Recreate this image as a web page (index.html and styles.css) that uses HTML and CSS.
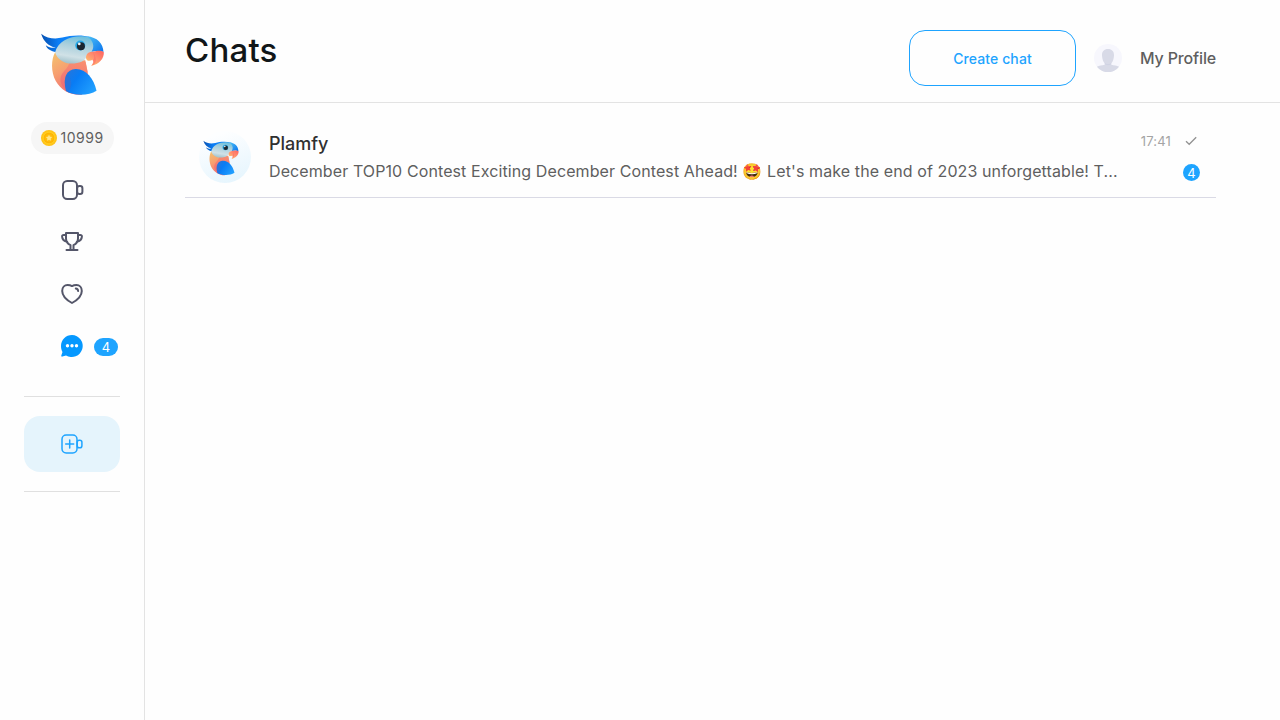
FILE: index.html
```html
<!DOCTYPE html>
<html lang="en">
<head>
<meta charset="utf-8">
<title>Chats</title>
<link rel="stylesheet" href="styles.css">
</head>
<body>
<svg class="defs" width="0" height="0" aria-hidden="true">
  <defs>
    <linearGradient id="crest" x1="0" y1="0" x2="1" y2="0"><stop offset="0" stop-color="#064fb0"/><stop offset=".35" stop-color="#0a7df5"/><stop offset="1" stop-color="#1d8fff"/></linearGradient>
    <linearGradient id="head" x1=".65" y1="0" x2=".4" y2="1"><stop offset="0" stop-color="#69bfde"/><stop offset=".35" stop-color="#a9cfdc"/><stop offset=".75" stop-color="#d0e1e6"/><stop offset="1" stop-color="#a3c3cc"/></linearGradient>
    <linearGradient id="body" x1="0" y1="0" x2=".5" y2="1"><stop offset="0" stop-color="#f3c46d"/><stop offset=".45" stop-color="#f7a070"/><stop offset="1" stop-color="#f06874"/></linearGradient>
    <linearGradient id="beak" x1=".8" y1="0" x2=".1" y2=".8"><stop offset="0" stop-color="#ff6a63"/><stop offset=".55" stop-color="#ff9270"/><stop offset="1" stop-color="#ffc36b"/></linearGradient>
    <linearGradient id="wing" x1="0" y1=".2" x2="1" y2=".8"><stop offset="0" stop-color="#2576dc"/><stop offset=".35" stop-color="#087cf5"/><stop offset="1" stop-color="#23a2ff"/></linearGradient>
    <linearGradient id="neck" x1=".8" y1="0" x2=".2" y2="1"><stop offset="0" stop-color="#f98a70"/><stop offset="1" stop-color="#ee6674"/></linearGradient>
    <linearGradient id="brow" x1="0" y1="0" x2="1" y2="1"><stop offset="0" stop-color="#4cc0f5"/><stop offset="1" stop-color="#0873ee"/></linearGradient>
    <symbol id="parrot" viewBox="31 25 193 191">
      <path fill="url(#crest)" d="M33 28C51 43 75 45 97 40C120 34 154 30 182 39L100 58L78 84C63 81 51 75 47 63C58 71 68 72 77 70C54 65 39 49 33 28Z"/>
      <path fill="url(#body)" d="M75 84C63 106 62 142 77 171C93 200 125 216 156 212L174 150L166 108L118 108Z"/>
      <path fill="url(#neck)" opacity=".75" d="M119 113H167L174 146C145 129 121 138 113 153C107 165 106 184 111 200C90 185 83 161 103 140C111 132 117 124 119 113Z"/>
      <path fill="url(#head)" d="M75 84C84 52 118 35 157 36C181 37 196 46 197 66C195 87 180 79 170 94C168 113 140 120 118 118C101 116 81 106 75 84Z"/>
      <path fill="url(#brow)" d="M171 36C202 39 220 57 221 84C208 78 197 81 185 83C195 67 191 49 171 36Z"/>
      <path fill="url(#beak)" d="M168 100C169 84 182 82 197 81C208 79 215 80 222 84C223 103 208 120 184 125C191 118 193 111 188 107C181 111 169 113 168 100Z"/>
      <path fill="#ff6969" opacity=".6" d="M188 82C196 96 194 105 188 108C192 112 190 119 184 125C205 121 199 96 188 82Z"/>
      <path fill="url(#wing)" d="M108 201C97 161 110 136 137 135C168 134 191 163 200 200C178 215 132 217 108 201Z"/>
      <path fill="#4c68bd" opacity=".35" d="M108 153C131 165 125 194 114 204L108 201C103 182 103 164 108 153Z"/>
      <circle cx="151" cy="64" r="15" fill="#26a7e7"/>
      <circle cx="153" cy="66" r="12" fill="#1b2630"/>
      <circle cx="148" cy="59" r="4" fill="#eefaff"/>
    </symbol>
    <radialGradient id="coin"><stop offset="0" stop-color="#ffcf2b"/><stop offset=".62" stop-color="#ffb300"/><stop offset=".7" stop-color="#ffcc20"/><stop offset="1" stop-color="#ffbf13"/></radialGradient>
  </defs>
</svg>
<div class="app">
  <aside class="sidebar">
    <svg class="logo"><use href="#parrot"/></svg>
    <div class="balance">
      <svg width="16" height="16" viewBox="0 0 16 16"><circle cx="8" cy="8" r="8" fill="url(#coin)"/><path fill="#ffe58a" d="M8 4.800l1 2 2.200.3-1.600 1.500.4 2.200-2-1-2 1 .4-2.200-1.600-1.500L7 6.800z"/></svg>
      <span>10999</span>
    </div>
    <nav class="nav">
      <a class="nav-item"><svg class="icon" viewBox="0 0 24 24"><rect x="3" y="3" width="14" height="18" rx="4.200"/><rect x="17.200" y="8" width="5.200" height="8" rx="2.300"/></svg></a>
      <a class="nav-item"><svg class="icon" viewBox="0 0 24 24"><path d="M6 3h12v5.500c0 3-1.500 5.200-4.500 6.700v3.200c0 .9.5 1.600 1.400 1.600H9.100c.9 0 1.400-.7 1.400-1.600v-3.200C7.500 13.700 6 11.500 6 8.500zM6.500 20h11M6 5H3.700C2.600 5 2 5.500 2.100 6.600c.2 3 1.900 4.500 5.100 5.100M18 5h2.300c1.100 0 1.700.5 1.600 1.600-.2 3-1.900 4.500-5.100 5.100"/></svg></a>
      <a class="nav-item"><svg class="icon" viewBox="0 0 24 24"><path d="M12 21C8.500 19 2.200 14.700 2.200 8.900c0-3.300 2.300-5.800 5.300-5.800 1.900 0 3.100.2 4.500 1 1.400-.8 2.600-1 4.500-1 3 0 5.300 2.500 5.300 5.800C21.800 14.700 15.500 19 12 21Z"/><path d="M15.800 6.600c1.400.1 2.200.9 2.300 2.400"/></svg></a>
      <a class="nav-item"><svg class="icon" viewBox="0 0 24 24"><path class="bubble" d="M12 1C5.900 1 1 5.900 1 12c0 2.300.6 4.200 1.500 6L1.300 21.400c-.2.900.3 1.400 1.100 1.200L6 21.400A11 11 0 1 0 12 1Z"/><g class="dots"><circle cx="7.500" cy="11.800" r="1.700"/><circle cx="12" cy="11.800" r="1.700"/><circle cx="16.500" cy="11.800" r="1.700"/></g></svg><span class="nav-badge">4</span></a>
    </nav>
    <div class="broadcast">
      <a class="go-live"><svg class="icon live" viewBox="0 0 24 24"><rect x="2" y="3.100" width="15" height="17.800" rx="4.200"/><rect x="17.200" y="8.200" width="4.700" height="7.600" rx="2.100"/><path d="M9.700 8v8M5.700 12h8"/></svg></a>
    </div>
  </aside>
  <main class="main">
    <header class="header">
      <h1>Chats</h1>
      <button class="create">Create chat</button>
      <svg class="avatar" viewBox="0 0 28 28"><circle cx="14" cy="14" r="14" fill="#f7f7fd"/><path fill="#d8dae7" d="M14 5c4 0 6.200 2.500 6 6.700-.2 3.300-1.200 6-2.700 7.500v1.600c2.700.6 5.500.7 7.800 2A14 14 0 0 1 2.900 22.800c2.300-1.300 5.100-1.400 7.800-2v-1.600C9.200 17.700 8.200 15 8 11.700 7.800 7.500 10 5 14 5Z"/><path d="M10.800 19.500c2 1.600 4.400 1.600 6.400 0" fill="none" stroke="#c9cde0" stroke-width=".6"/></svg>
      <a class="profile">My Profile</a>
    </header>
    <section class="chats">
      <article class="chat">
        <div class="chat-avatar"><svg><use href="#parrot"/></svg></div>
        <div class="chat-text">
          <div class="name">Plamfy</div>
          <div class="message">December TOP10 Contest Exciting December Contest Ahead! 🤩 Let's make the end of 2023 unforgettable! T...</div>
        </div>
        <div class="meta">
          <div class="sent"><time>17:41</time><svg width="12" height="10" viewBox="0 0 12 10"><path d="M1 5.300 4.200 8.300 11.200 1.300"/></svg></div>
          <span class="unread">4</span>
        </div>
      </article>
    </section>
  </main>
</div>
</body>
</html>
```
FILE: styles.css
```css
* { box-sizing: border-box; }
body { margin: 0; background: #fefefe; color: #5f5f5f; font-family: Inter, "Noto Sans", sans-serif; }
.defs { display: block; }
.app { display: flex; height: 720px; overflow: hidden; }
.sidebar { width: 145px; flex: none; padding: 32px 24px 0; border-right: 1px solid #e3e3e3; display: flex; flex-direction: column; align-items: center; }
.logo { width: 64px; height: 64px; flex: none; transform: translate(.5px, .3px); }
.balance { display: flex; align-items: center; gap: 4px; width: 83px; height: 32px; margin-top: 26px; padding-left: 10px; border-radius: 16px; background: #f6f6f6; font-size: 14px; letter-spacing: .5px; line-height: 18px; flex: none; }
.balance span { padding-bottom: 1px; }
.nav { width: 100%; margin-top: 10px; }
.nav-item { display: flex; align-items: center; height: 52px; padding-left: 36px; gap: 10px; }
.icon { width: 24px; height: 24px; flex: none; fill: none; stroke: #545669; stroke-width: 2; stroke-linecap: round; stroke-linejoin: round; }
.bubble { fill: #0598ff; stroke: none; }
.dots { fill: #fff; stroke: none; }
.nav-badge { width: 24px; height: 18px; flex: none; margin-top: 1px; border-radius: 9px; background: #1ea4ff; color: #fff; font-size: 13px; line-height: 19px; text-align: center; }
.broadcast { width: 96px; height: 96px; margin-top: 24px; padding: 19px 0; border: solid #e0e0e0; border-width: 1px 0; flex: none; }
.go-live { display: flex; align-items: center; justify-content: center; height: 56px; border-radius: 16px; background: #e5f4fc; }
.live { stroke: #1ea4ff; stroke-width: 1.5; }
.main { flex: 1; min-width: 0; }
.header { display: flex; height: 103px; padding: 30px 64px 0 40px; border-bottom: 1px solid #e3e3e3; }
h1 { margin: 0 auto 0 0; color: #111618; font-size: 33px; line-height: 41px; font-weight: 500; letter-spacing: .2px; }
.create { width: 167px; height: 56px; border: 1px solid #1ea4ff; border-radius: 16px; background: transparent; color: #1ea4ff; font: 500 14px/20px Inter, sans-serif; letter-spacing: .1px; padding: 2px 0 0; }
.avatar { width: 28px; height: 28px; margin: 14px 18px 0; }
.profile { width: 76px; font-size: 16px; font-weight: 500; letter-spacing: -.15px; line-height: 56px; white-space: nowrap; }
.chats { padding: 16px 64px 0 40px; }
.chat { display: flex; height: 79px; border-bottom: 1px solid #dadae5; padding: 12px 16px 0 14px; }
.chat-avatar { width: 52px; height: 52px; margin-right: 18px; padding: 9px 0 0 4px; border-radius: 50%; background: linear-gradient(160deg, #fdfeff 15%, #e3f4fd); flex: none; }
.chat-avatar svg { display: block; width: 36px; height: 36px; }
.chat-text { width: 850px; flex: none; white-space: nowrap; }
.name { color: #303030; font-size: 18px; line-height: 24px; font-weight: 500; margin-top: 1px; }
.message { font-size: 16px; line-height: 24px; letter-spacing: .1px; margin-top: 3px; }
.meta { flex: 1; display: flex; flex-direction: column; align-items: flex-end; }
.sent { display: flex; align-items: center; gap: 14px; height: 20px; padding-right: 3px; color: #a4a4a4; font-size: 13px; letter-spacing: .15px; white-space: nowrap; }
.sent path { fill: none; stroke: #929292; stroke-width: 1.3; }
.unread { width: 17px; height: 17px; margin-top: 13px; border-radius: 50%; background: #1ea4ff; color: #fff; font-size: 13px; line-height: 18px; text-align: center; }
```
